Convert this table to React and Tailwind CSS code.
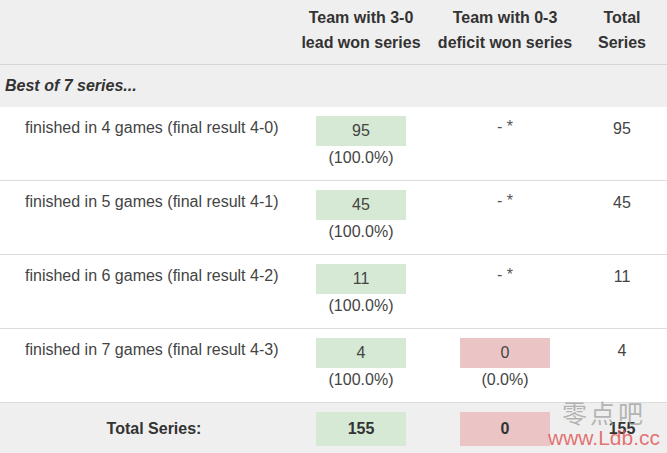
const rows = [
  { label: 'finished in 4 games (final result 4-0)', won: 95, pct: '(100.0%)', total: 95 },
  { label: 'finished in 5 games (final result 4-1)', won: 45, pct: '(100.0%)', total: 45 },
  { label: 'finished in 6 games (final result 4-2)', won: 11, pct: '(100.0%)', total: 11 },
  { label: 'finished in 7 games (final result 4-3)', won: 4, pct: '(100.0%)', total: 4, lost: 0, lostPct: '(0.0%)' },
];

const grid = 'grid grid-cols-[294px_134px_154px_1fr]';

export default function App() {
  return (
    <div className="relative w-[667px] h-[453px] overflow-hidden bg-white text-[16px] leading-[20px] text-[#333]" style={{ fontFamily: '"Liberation Sans", Arial, sans-serif' }}>
      <div className={`${grid} h-[65px] bg-[#efefef] border-b border-[#d6d6d6] font-bold leading-[25px] pt-[5px]`}>
        <div />
        <div className="text-center">Team with 3-0<br />lead won series</div>
        <div className="text-center">Team with 0-3<br />deficit won series</div>
        <div className="text-center pr-[5px]">Total<br />Series</div>
      </div>
      <div className="h-[42px] bg-[#efefef] flex items-center pl-[5px] font-bold italic">Best of 7 series...</div>
      {rows.map((r) => (
        <div key={r.label} className={`${grid} h-[74px] border-b border-[#dcdcdc] text-[#444]`}>
          <div className="pl-[25px] pt-[11px]">{r.label}</div>
          <div className="flex flex-col items-center pt-[9px]">
            <div className="w-[90px] h-[30px] bg-[#d5e9d5] flex items-center justify-center">{r.won}</div>
            <div className="mt-[2px]">{r.pct}</div>
          </div>
          <div className="flex flex-col items-center pt-[9px]">
            {r.lostPct ? (
              <>
                <div className="w-[90px] h-[30px] bg-[#ebc5c5] flex items-center justify-center">{r.lost}</div>
                <div className="mt-[2px]">{r.lostPct}</div>
              </>
            ) : (
              <div className="pt-[1px] text-[#555]">- *</div>
            )}
          </div>
          <div className="text-center pt-[12px] pr-[5px]">{r.total}</div>
        </div>
      ))}
      <div className={`${grid} h-[51px] bg-[#efefef] font-bold items-center`}>
        <div className="text-center pl-[14px]">Total Series:</div>
        <div className="flex justify-center">
          <div className="w-[90px] h-[34px] bg-[#d5e9d5] flex items-center justify-center">155</div>
        </div>
        <div className="flex justify-center">
          <div className="w-[90px] h-[34px] bg-[#ebc5c5] flex items-center justify-center">0</div>
        </div>
        <div className="text-center pr-[5px]">155</div>
      </div>
      <div className="absolute left-[562px] top-[400px] text-[25px] leading-none text-[#999]/70 tracking-[3px]" style={{ fontFamily: '"Noto Sans CJK SC", serif' }}>零点吧</div>
      <div className="absolute left-[548px] top-[427px] text-[21px] leading-none text-[#e05050]/80" style={{ fontFamily: '"Liberation Sans", Arial, sans-serif' }}>www.Ldb.cc</div>
    </div>
  );
}
